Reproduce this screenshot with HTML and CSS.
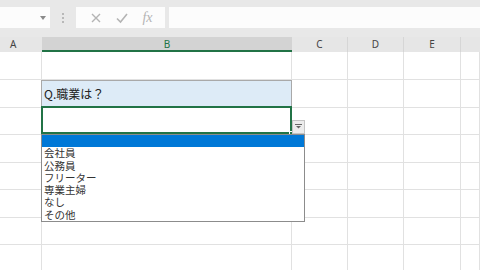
FILE: index.html
```html
<!DOCTYPE html>
<html lang="ja">
<head>
<meta charset="utf-8">
<link rel="stylesheet" href="styles.css">
</head>
<body>
<div class="app">
  <div class="toolbar">
    <div class="namebox"><span class="caret"></span></div>
    <div class="dots"><i></i><i></i><i></i></div>
    <div class="fnbox">
      <svg class="ico" width="12" height="12" viewBox="0 0 12 12"><path d="M2 2 L10 10 M10 2 L2 10" stroke="#b4b4b4" stroke-width="1.4" fill="none"/></svg>
      <svg class="ico" width="14" height="12" viewBox="0 0 14 12"><path d="M2 6.5 L5.5 10 L12 2" stroke="#b4b4b4" stroke-width="1.6" fill="none"/></svg>
      <span class="fx">fx</span>
    </div>
    <div class="formula"></div>
  </div>
  <div class="colheads">
    <div class="ch ca">A</div>
    <div class="ch cb">B</div>
    <div class="ch cc">C</div>
    <div class="ch cd">D</div>
    <div class="ch ce">E</div>
    <div class="ch cf"></div>
  </div>
  <div class="sheet">
    <div class="grid">
      <div class="c"></div><div class="c"></div><div class="c"></div><div class="c"></div><div class="c"></div><div class="c"></div>
      <div class="c"></div><div class="c q">Q.職業は？</div><div class="c"></div><div class="c"></div><div class="c"></div><div class="c"></div>
      <div class="c"></div><div class="c"></div><div class="c"></div><div class="c"></div><div class="c"></div><div class="c"></div>
      <div class="c"></div><div class="c"></div><div class="c"></div><div class="c"></div><div class="c"></div><div class="c"></div>
      <div class="c"></div><div class="c"></div><div class="c"></div><div class="c"></div><div class="c"></div><div class="c"></div>
      <div class="c"></div><div class="c"></div><div class="c"></div><div class="c"></div><div class="c"></div><div class="c"></div>
      <div class="c"></div><div class="c"></div><div class="c"></div><div class="c"></div><div class="c"></div><div class="c"></div>
      <div class="c"></div><div class="c"></div><div class="c"></div><div class="c"></div><div class="c"></div><div class="c"></div>
    </div>
    <div class="selection"><span class="handle"></span></div>
    <div class="ddbtn"><svg width="7" height="6" viewBox="0 0 7 6"><rect x="0" y="0" width="7" height="1" fill="#666"/><path d="M1 2 L6 2 L3.5 4.5 Z" fill="#666"/></svg></div>
    <ul class="ddlist">
      <li class="sel"></li>
      <li>会社員</li>
      <li>公務員</li>
      <li>フリーター</li>
      <li>専業主婦</li>
      <li>なし</li>
      <li>その他</li>
    </ul>
  </div>
</div>
</body>
</html>
```

FILE: styles.css
```css
* { box-sizing: border-box; }
html, body { margin: 0; padding: 0; }
body {
  width: 480px;
  height: 270px;
  overflow: hidden;
  background: #fff;
  font-family: "Noto Sans", "Noto Sans CJK JP", sans-serif;
}
.app { width: 480px; height: 270px; overflow: hidden; }

.toolbar {
  height: 37px;
  background: #e8e8e8;
  display: flex;
  align-items: flex-start;
  padding-top: 7px;
}
.namebox {
  width: 50px;
  height: 21px;
  background: #fcfcfc;
  position: relative;
}
.caret {
  position: absolute;
  right: 4px;
  top: 9px;
  border-left: 3px solid transparent;
  border-right: 3px solid transparent;
  border-top: 4px solid #8a8a8a;
}
.dots {
  width: 26px;
  height: 21px;
  display: flex;
  flex-direction: column;
  align-items: center;
  justify-content: center;
  gap: 2px;
}
.dots i { display: block; width: 2px; height: 2px; background: #b8b8b8; }
.fnbox {
  width: 89px;
  height: 21px;
  background: #fcfcfc;
  display: flex;
  align-items: center;
  justify-content: space-around;
  padding: 0 6px 0 8px;
}
.fx {
  font-family: "Liberation Serif", serif;
  font-style: italic;
  font-size: 14px;
  color: #b4b4b4;
  line-height: 1;
}
.formula {
  flex: 1;
  height: 21px;
  margin-left: 4px;
  background: #fcfcfc;
}

.colheads {
  height: 15px;
  display: flex;
  background: #e6e6e6;
  font-size: 10px;
  color: #444;
  line-height: 15px;
}
.ch { text-align: center; border-right: 1px solid #d6d6d6; }
.ca { width: 42px; text-align: left; padding-left: 10px; border-right: none; }
.cb { width: 250px; background: #d3d3d3; color: #217346; border-bottom: 2px solid #217346; line-height: 14px; border-right: none; }
.cc { width: 56px; }
.cd { width: 56px; }
.ce { width: 57px; }
.cf { flex: 1; border-right: none; }

.sheet { position: relative; }
.grid {
  display: grid;
  grid-template-columns: 42px 250px 56px 56px 57px 19px;
  grid-template-rows: 28px 28px 27px 28px 27px 28px 27px 28px;
}
.c {
  border-right: 1px solid #e1e1e1;
  border-bottom: 1px solid #e1e1e1;
}
.q {
  background: #ddebf7;
  border-top: 1px solid #a9a9a9;
  border-right: 1px solid #a9a9a9;
  box-shadow: inset 1px 0 0 #a9a9a9;
  margin-left: -1px;
  font-family: "Noto Sans CJK JP", sans-serif;
  font-size: 12px;
  color: #222;
  padding-left: 3px;
  line-height: 26px;
}

.selection {
  position: absolute;
  left: 41px;
  top: 54px;
  width: 251px;
  height: 28px;
  border: 2px solid #217346;
}
.handle {
  position: absolute;
  right: -4px;
  bottom: -4px;
  width: 5px;
  height: 5px;
  background: #217346;
  border: 1px solid #fff;
}
.ddbtn {
  position: absolute;
  left: 292px;
  top: 68px;
  width: 13px;
  height: 14px;
  background: #ececec;
  border: 1px solid #c4c4c4;
  display: flex;
  align-items: center;
  justify-content: center;
}
.ddlist {
  position: absolute;
  left: 41px;
  top: 82px;
  width: 264px;
  height: 88px;
  margin: 0;
  padding: 0;
  list-style: none;
  background: #fff;
  border: 1px solid #8c8c8c;
  font-family: "Noto Sans CJK JP", sans-serif;
  font-size: 10.5px;
  color: #333;
}
.ddlist li {
  height: 12.3px;
  line-height: 12.3px;
  padding-left: 2px;
  overflow: visible;
}
.ddlist li.sel { background: #0078d7; }
```
